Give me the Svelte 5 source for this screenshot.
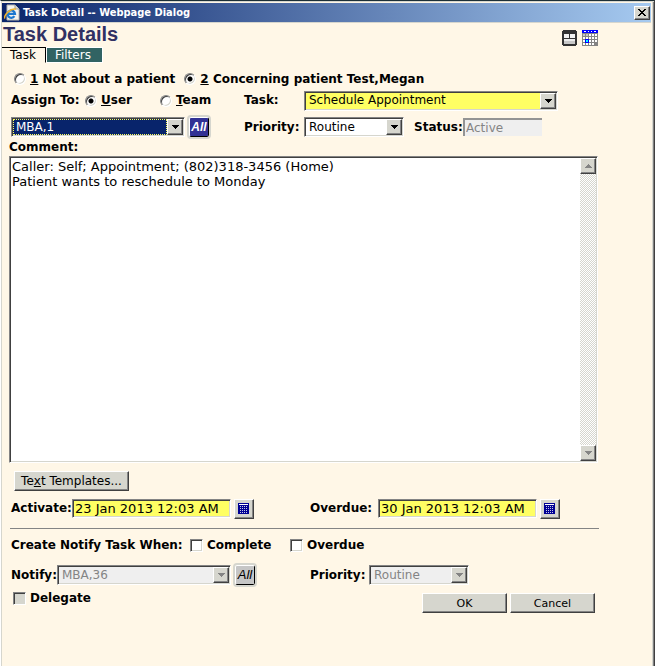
<script>
  let about = $state('patient');
  let assign = $state('user');
  let comment = $state(
    'Caller: Self; Appointment; (802)318-3456 (Home)\nPatient wants to reschedule to Monday'
  );
  let activate = $state('23 Jan 2013 12:03 AM');
  let overdue = $state('30 Jan 2013 12:03 AM');
</script>

{#snippet arrow(up = false)}
  <svg width="7" height="4" viewBox="0 0 7 4" shape-rendering="crispEdges" aria-hidden="true">
    <path d={up ? 'M3 0h1v1h1v1h1v1h1v1H0V3h1V2h1V1h1z' : 'M0 0h7v1H6v1H5v1H4v1H3V3H2V2H1V1H0z'} fill="currentColor" />
  </svg>
{/snippet}

{#snippet calendar()}
  <svg width="12" height="12" viewBox="0 0 12 12" shape-rendering="crispEdges" aria-hidden="true">
    <path d="M0 0h11v11H0z" fill="#000094" />
    <path d="M1 1h9v1H1z" fill="#fff" />
    <path d="M2 3.5h8M2 5.5h8M2 7.5h8M2 9.5h8" stroke="#c6c6e7" stroke-dasharray="1 1" />
  </svg>
{/snippet}

<div class="dialog">
  <header class="titlebar">
    <svg width="16" height="17" viewBox="0 0 16 17" aria-hidden="true">
      <path d="M3 1h8l4 4v11H3z" fill="#f4f4ee" stroke="#b8b8b0" />
      <path d="M11 1v4h4" fill="#d8d8d0" stroke="#a0a098" />
      <path d="M10.4 12.2A3.7 3.7 0 1 1 11 9.8H4" fill="none" stroke="#1b78cf" stroke-width="2.2" />
      <path d="M1 14.5C-1 11.5 7 3.6 12 5.2" fill="none" stroke="#efb32c" stroke-width="1.4" />
    </svg>
    <span class="caption">Task Detail -- Webpage Dialog</span>
    <button class="close" aria-label="Close">
      <svg width="8" height="7" viewBox="0 0 8 7" shape-rendering="crispEdges" aria-hidden="true">
        <path d="M0 0h2v1h1v1h2V1h1V0h2v1H7v1H6v1H5v1h1v1h1v1h1v1H6V6H5V5H3v1H2v1H0V6h1V5h1V4h1V3H2V2H1V1H0z" fill="#000" />
      </svg>
    </button>
  </header>

  <div class="heading">
    <h1>Task Details</h1>
    <div class="tools">
      <svg width="15" height="16" viewBox="0 0 15 16" shape-rendering="crispEdges" aria-hidden="true">
        <path d="M1 0h13v1h1v14h-1v1H1v-1H0V1h1z" fill="#333" />
        <path d="M2 4h5v4H2zM8 4h5v4H8z" fill="#f2f2f2" />
        <path d="M2 9h11v5H2z" fill="#c8c8c8" />
        <path d="M2 9h11v2H2z" fill="#ececec" />
      </svg>
      <svg width="16" height="16" viewBox="0 0 16 16" shape-rendering="crispEdges" aria-hidden="true">
        <path d="M0 0h16v16H0z" fill="#848484" />
        <path d="M0 0h16v3H0z" fill="#00f" />
        <path d="M2 1h2v1H2zM6 1h1v1H6zM9 1h1v1H9zM12 1h2v1h-2z" fill="#fff" />
        <path d="M1 4h2v2H1zM4 4h2v2H4z" fill="#c6c6c6" />
        <path d="M7 4h2v2H7zM10 4h2v2h-2zM13 4h2v2h-2zM1 7h2v2H1zM4 7h2v2H4zM7 7h2v2H7zM10 7h2v2h-2zM13 7h2v2h-2zM1 10h2v2H1zM7 10h2v2H7zM10 10h2v2h-2zM13 10h2v2h-2zM1 13h2v2H1zM4 13h2v2H4zM7 13h2v2H7zM10 13h2v2h-2z" fill="#fff" />
        <path d="M3 9h4v4H3z" fill="#00f" />
        <path d="M4 10h2v2H4z" fill="#0ff" />
      </svg>
    </div>
  </div>

  <nav class="tabs">
    <button class="tab current">Task</button>
    <button class="tab">Filters</button>
  </nav>

  <form onsubmit={(e) => e.preventDefault()}>
    <div class="row about">
      <label class="choice"><input type="radio" value="none" bind:group={about} /><span><u>1</u> Not about a patient</span></label>
      <label class="choice"><input type="radio" value="patient" bind:group={about} /><span><u>2</u> Concerning patient Test,Megan</span></label>
    </div>

    <div class="row">
      <div class="left">
        <span class="assign">Assign To:</span>
        <label class="choice user"><input type="radio" value="user" bind:group={assign} /><span><u>U</u>ser</span></label>
        <label class="choice"><input type="radio" value="team" bind:group={assign} /><span><u>T</u>eam</span></label>
      </div>
      <label class="mid" for="task">Task:</label>
      <div class="combo yellow wide">
        <select id="task"><option>Schedule Appointment</option></select>
        <span class="drop">{@render arrow()}</span>
      </div>
    </div>

    <div class="row tall">
      <div class="left">
        <div class="combo person selected">
          <select aria-label="Assigned user"><option>MBA,1</option></select>
          <span class="drop">{@render arrow()}</span>
        </div>
        <button class="all blue">All</button>
      </div>
      <label class="mid" for="priority">Priority:</label>
      <div class="combo short">
        <select id="priority"><option>Routine</option></select>
        <span class="drop">{@render arrow()}</span>
      </div>
      <label class="status" for="status">Status:</label>
      <input class="state" id="status" value="Active" disabled />
    </div>

    <label class="comment" for="comment">Comment:</label>
    <div class="memo">
      <textarea id="comment" bind:value={comment} spellcheck="false"></textarea>
      <div class="scroll" aria-hidden="true">
        <span class="drop">{@render arrow(true)}</span>
        <span class="drop">{@render arrow()}</span>
      </div>
    </div>

    <button class="push templates">Te<u>x</u>t Templates...</button>

    <div class="row dates">
      <div class="half">
        <label class="activate" for="activate">Activate:</label>
        <input class="date" id="activate" bind:value={activate} />
        <button class="pick" aria-label="Pick activate date">{@render calendar()}</button>
      </div>
      <label class="overdue" for="overdue">Overdue:</label>
      <input class="date" id="overdue" bind:value={overdue} />
      <button class="pick" aria-label="Pick overdue date">{@render calendar()}</button>
    </div>

    <hr />

    <div class="row notify-when">
      <span class="when">Create Notify Task When:</span>
      <label class="choice complete"><input type="checkbox" /><span>Complete</span></label>
      <label class="choice"><input type="checkbox" /><span>Overdue</span></label>
    </div>

    <div class="row notify">
      <div class="half">
        <label class="who" for="notify">Notify:</label>
        <div class="combo person off">
          <select id="notify" disabled><option>MBA,36</option></select>
          <span class="drop">{@render arrow()}</span>
        </div>
        <button class="all">All</button>
      </div>
      <label class="level" for="notify-priority">Priority:</label>
      <div class="combo short off">
        <select id="notify-priority" disabled><option>Routine</option></select>
        <span class="drop">{@render arrow()}</span>
      </div>
    </div>

    <footer>
      <label class="choice delegate"><input type="checkbox" disabled /><span>Delegate</span></label>
      <div class="actions">
        <button class="push">OK</button>
        <button class="push">Cancel</button>
      </div>
    </footer>
  </form>
</div>

<style>
  :global(body) {
    background: #fff7e7;
  }
  * {
    box-sizing: border-box;
  }
  .dialog {
    min-height: 100vh;
    border-top: 1px solid #1c2f36;
    border-left: 1px solid #fff;
    border-right: 1px solid #404040;
    box-shadow: inset 1px 1px #d6d6ce, inset -1px 0 #808080, inset -2px 0 #d6d6ce;
    padding: 2px 3px 0 1px;
    background: #fff7e7;
    color: #000;
    font: bold 12px/15px 'DejaVu Sans', sans-serif;
  }
  button, input, select, textarea {
    appearance: none;
    margin: 0;
    padding: 0;
    border: 0;
    border-radius: 0;
    font: 12px/15px 'DejaVu Sans', sans-serif;
    color: #000;
    outline: 0;
  }
  svg {
    display: block;
    flex: none;
  }
  .titlebar {
    display: flex;
    align-items: center;
    gap: 3px;
    height: 20px;
    padding: 0 1px 0 2px;
    border-bottom: 1px solid #d6d6ce;
    background: linear-gradient(90deg, #0a246a, #a6caf0);
    color: #fff;
  }
  .caption {
    flex: 1;
    font: bold 11px/16px 'DejaVu Sans Condensed', sans-serif;
  }
  .close, .drop, .push, .pick {
    display: flex;
    align-items: center;
    justify-content: center;
    background: #d6d6ce;
    border: 1px solid;
    border-color: #fff #404040 #404040 #fff;
    box-shadow: inset -1px -1px #848484;
  }
  .close {
    width: 16px;
    height: 14px;
  }
  .heading {
    display: flex;
    justify-content: space-between;
    height: 24px;
    padding: 0 53px 0 1px;
  }
  h1 {
    margin: 0;
    color: #313163;
    font: bold 20px/22px 'Liberation Sans', sans-serif;
  }
  .tools {
    display: flex;
    gap: 5px;
    padding-top: 7px;
  }
  .tabs {
    display: flex;
    height: 16px;
  }
  .tab {
    height: 16px;
    padding: 0 11px 0 8px;
    border: 1px solid #fff;
    background: #316363;
    color: #fff;
    line-height: 14px;
  }
  .current {
    padding: 0 9px 0 8px;
    border-width: 1px 1px 1px 0;
    border-color: #000 #000 transparent;
    background: none;
    color: #000;
  }
  form {
    padding: 5px 53px 20px 7px;
  }
  .row {
    display: flex;
    align-items: center;
    height: 21px;
  }
  .about {
    gap: 9px;
    padding-left: 5px;
    height: 22px;
  }
  .tall {
    height: 24px;
    margin-top: 4px;
  }
  .left {
    display: flex;
    align-items: center;
    width: 235px;
    padding-left: 2px;
  }
  .assign {
    width: 74px;
  }
  .user {
    width: 75px;
  }
  .mid {
    width: 60px;
  }
  .status {
    width: 49px;
    margin-left: 10px;
  }
  .choice {
    display: flex;
    align-items: center;
    gap: 4px;
    white-space: nowrap;
  }
  input[type='radio'] {
    width: 12px;
    height: 12px;
    border: 1px solid;
    border-color: #848484 #fff #fff #848484;
    border-radius: 50%;
    box-shadow: inset 1px 1px #404040, inset -1px -1px #d6d6ce;
    background: #fff;
  }
  input[type='radio']:checked {
    background: radial-gradient(circle, #000 2px, #fff 3px);
  }
  input[type='checkbox'], .combo, .memo, .date {
    border: 1px solid;
    border-color: #848484 #fff #fff #848484;
    box-shadow: inset 1px 1px #404040, inset -1px -1px #d6d6ce;
    background: #fff;
  }
  input[type='checkbox'] {
    width: 13px;
    height: 13px;
  }
  input[type='checkbox']:disabled {
    background: #d6d6ce;
  }
  .combo {
    display: flex;
    flex: none;
    height: 20px;
    padding: 1px;
  }
  .combo select {
    flex: 1;
    min-width: 0;
    padding-left: 3px;
    background: transparent;
  }
  .drop {
    width: 16px;
    height: 16px;
    flex: none;
    pointer-events: none;
  }
  .wide {
    width: 254px;
  }
  .person {
    width: 174px;
  }
  .short {
    width: 100px;
  }
  .combo.yellow, .date {
    background: #ffff63;
  }
  .selected select {
    padding-left: 2px;
    border: 1px dotted #ffff63;
    background: #08246b;
    color: #fff;
  }
  .combo.off {
    background: #efefef;
  }
  .off select, .state {
    color: #848484;
    opacity: 1;
  }
  .off .drop, .scroll .drop {
    color: #848484;
  }
  .state {
    width: 79px;
    height: 18px;
    padding-left: 1px;
    border: solid #949494;
    border-width: 2px 0 0 2px;
    background: #efefef;
  }
  .all {
    width: 20px;
    height: 20px;
    margin-left: 4px;
    border: 1px solid;
    border-color: #fff #000 #000 #fff;
    border-radius: 2px;
    outline: 2px solid #d6d6ce;
    background: #c6c6c6;
    font: italic 13px/16px 'Liberation Sans', sans-serif;
    text-align: center;
  }
  .blue {
    background: #313194;
    color: #fff;
    font-weight: bold;
    font-size: 12px;
  }
  .comment {
    display: block;
    line-height: 17px;
  }
  .memo {
    display: flex;
    height: 307px;
    padding: 1px;
  }
  textarea {
    flex: 1;
    min-width: 0;
    padding: 1px;
    resize: none;
    background: #fff;
    font-size: 13px;
  }
  .scroll {
    display: flex;
    flex-direction: column;
    justify-content: space-between;
    background: repeating-conic-gradient(#d6d6ce 0 25%, #fff 0 50%) 0 0 / 2px 2px;
  }
  .push {
    width: 85px;
    height: 20px;
    font-size: 11px;
  }
  .templates {
    width: 115px;
    margin: 8px 0 0 5px;
    font-size: 12px;
    white-space: pre;
  }
  .dates {
    margin-top: 7px;
  }
  .half {
    display: flex;
    align-items: center;
    width: 301px;
    padding-left: 2px;
  }
  .activate {
    width: 61px;
  }
  .overdue {
    width: 68px;
  }
  .date {
    width: 159px;
    height: 19px;
    padding-left: 2px;
    font-size: 13px;
  }
  .pick {
    width: 20px;
    height: 20px;
    margin-left: 3px;
  }
  hr {
    height: 1px;
    margin: 9px -1px 0 1px;
    border: 0;
    background: #848484;
  }
  .notify-when {
    margin-top: 6px;
    padding-left: 2px;
  }
  .when {
    width: 179px;
  }
  .complete {
    width: 100px;
  }
  .notify {
    height: 24px;
    margin-top: 7px;
  }
  .who {
    width: 46px;
  }
  .level {
    width: 59px;
  }
  footer {
    display: flex;
    justify-content: space-between;
    padding: 4px 3px 0 4px;
  }
  .delegate {
    height: 15px;
  }
  .actions {
    display: flex;
    gap: 3px;
    padding-top: 2px;
  }
</style>
